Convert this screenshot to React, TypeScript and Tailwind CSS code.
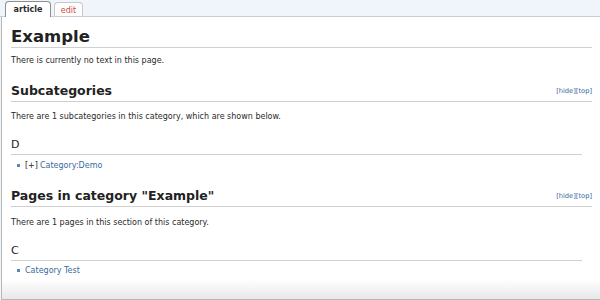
import React from "react";

const font = { fontFamily: '"DejaVu Sans", Verdana, sans-serif' };

function HideTop() {
  return (
    <span className="text-[6.7px] leading-none text-[#3a6aa0]">[hide][top]</span>
  );
}

function Bullet() {
  return <span className="inline-block w-[3px] h-[3px] bg-[#5a86b8] mr-[5px] mb-[2px]" />;
}

export default function App() {
  return (
    <div className="w-[600px] h-[300px] overflow-hidden bg-[#f0f4fb] text-[#2a2a2a] flex flex-col" style={font}>
      {/* tabs */}
      <div className="h-[17px] flex items-end pl-[5px] gap-[3px] border-b border-[#c9cdd6] shrink-0">
        <div className="h-[16px] w-[46px] -mb-px bg-white border border-b-0 border-[#8e8e8e] rounded-t-[4px] flex justify-center pt-[3px] text-[8px] font-bold leading-[10px]">
          article
        </div>
        <div className="h-[14px] w-[29px] bg-[#fdfdfd] border border-b-0 border-[#c8c8c8] rounded-t-[4px] flex justify-center pt-[3px] text-[8px] leading-[10px] text-[#d24a4a]">
          edit
        </div>
      </div>

      {/* page body */}
      <div className="flex-1 ml-[1px] bg-white border-l border-b border-[#b8b8b8] pl-[9px] pr-[8px] flex flex-col bg-gradient-to-b from-white from-[93%] to-[#e8e8e8]">
        <h1 className="mt-[10px] text-[16.5px] leading-[20px] font-bold text-[#222] border-b border-[#d0d0d0]">Example</h1>
        <p className="mt-[8px] text-[8px] leading-[10px]">There is currently no text in this page.</p>

        <div className="mt-[17px] pb-[2px] flex items-center justify-between border-b border-[#d0d0d0]">
          <h2 className="text-[12.5px] leading-[16px] font-bold text-[#222]">Subcategories</h2>
          <HideTop />
        </div>
        <p className="mt-[10px] text-[8px] leading-[10px]">There are 1 subcategories in this category, which are shown below.</p>

        <div className="mr-[10px]">
          <h3 className="mt-[16px] pb-[3px] text-[11px] leading-[13px] font-medium text-[#222] border-b border-[#d0d0d0]">D</h3>
          <ul className="mt-[6px] text-[8px] leading-[10px] pl-[6px]">
            <li className="flex items-center">
              <Bullet />
              <span className="mr-[2px]">[+]</span>
              <span className="text-[#3a6aa0]">Category:Demo</span>
            </li>
          </ul>
        </div>

        <div className="mt-[17px] pb-[2px] flex items-center justify-between border-b border-[#d0d0d0]">
          <h2 className="text-[12.5px] leading-[16px] font-bold text-[#222]">Pages in category "Example"</h2>
          <HideTop />
        </div>
        <p className="mt-[11px] text-[8px] leading-[10px]">There are 1 pages in this section of this category.</p>

        <div className="mr-[10px]">
          <h3 className="mt-[16px] pb-[3px] text-[11px] leading-[13px] font-medium text-[#222] border-b border-[#d0d0d0]">C</h3>
          <ul className="mt-[5px] text-[8px] leading-[10px] pl-[6px]">
            <li className="flex items-center">
              <Bullet />
              <span className="text-[#3a6aa0]">Category Test</span>
            </li>
          </ul>
        </div>
      </div>
    </div>
  );
}
